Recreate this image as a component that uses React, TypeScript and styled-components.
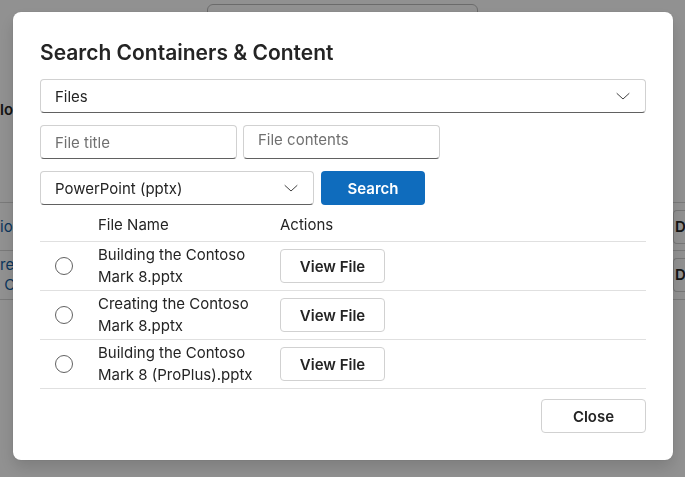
import React from 'react';
import styled, { createGlobalStyle } from 'styled-components';

const GlobalStyle = createGlobalStyle`
  html, body {
    margin: 0;
    padding: 0;
    background: #ffffff;
    font-family: Inter, "Open Sans", "Liberation Sans", sans-serif;
    color: #242424;
    overflow: hidden;
  }
  * { box-sizing: border-box; }
`;

// ---- page behind the dialog ----
const Page = styled.div`
  width: 685px;
  height: 477px;
  overflow: hidden;
`;

const TopSearch = styled.div`
  margin: 4px 0 0 207px;
  width: 271px;
  height: 32px;
  border: 1px solid #bdbdbd;
  border-radius: 6px;
`;

const PageHeading = styled.div`
  margin-top: 63px;
  font-size: 15px;
  font-weight: 600;
  line-height: 22px;
`;

const BgTable = styled.div`
  margin-top: 81px;
  border-top: 1px solid #d6d6d6;
`;

const BgRow = styled.div<{ $height: number }>`
  display: flex;
  justify-content: space-between;
  align-items: center;
  height: ${p => p.$height}px;
  border-bottom: 1px solid #d6d6d6;
`;

const BgLink = styled.div`
  color: #115ea3;
  font-size: 15px;
  line-height: 20px;
  width: 60px;
`;

const BgButton = styled.div`
  width: 12px;
  height: 34px;
  border: 1px solid #d1d1d1;
  border-right: none;
  border-radius: 4px 0 0 4px;
  padding-left: 1px;
  font-size: 15px;
  font-weight: 600;
  line-height: 32px;
  overflow: hidden;
`;

// ---- dialog ----
const Overlay = styled.div`
  position: fixed;
  inset: 0;
  background: rgba(0, 0, 0, 0.43);
  display: flex;
  justify-content: flex-start;
  align-items: flex-start;
  padding: 12px 0 0 13px;
`;

const Dialog = styled.div`
  width: 660px;
  background: #ffffff;
  border-radius: 8px;
  padding: 27px 27px 27px 27px;
  box-shadow: 0 8px 16px rgba(0, 0, 0, 0.14), 0 0 2px rgba(0, 0, 0, 0.12);
  display: flex;
  flex-direction: column;
`;

const Title = styled.h2`
  margin: 0 0 12px;
  font-size: 21px;
  font-weight: 600;
  line-height: 28px;
`;

const Field = styled.div<{ $width?: number }>`
  width: ${p => (p.$width ? `${p.$width}px` : '100%')};
  height: 34px;
  border: 1px solid #d1d1d1;
  border-bottom-color: #616161;
  border-radius: 4px;
  display: flex;
  align-items: center;
  padding: 0 14px;
  font-size: 15px;
  background: #fff;
`;

const FieldText = styled.span<{ $placeholder?: boolean; $top?: boolean }>`
  flex: 1;
  color: ${p => (p.$placeholder ? '#707070' : '#242424')};
  align-self: ${p => (p.$top ? 'flex-start' : 'center')};
  margin-top: ${p => (p.$top ? '4px' : '0')};
`;

const Chevron = () => (
  <svg width="16" height="16" viewBox="0 0 16 16" fill="none">
    <path d="M2 5.5 L8 11 L14 5.5" stroke="#424242" strokeWidth="1" strokeLinecap="round" strokeLinejoin="round" />
  </svg>
);

const Row = styled.div<{ $gap: number }>`
  display: flex;
  gap: ${p => p.$gap}px;
  margin-top: 12px;
`;

const PrimaryButton = styled.button`
  width: 104px;
  height: 34px;
  border: none;
  border-radius: 4px;
  background: #0f6cbd;
  color: #fff;
  font-family: inherit;
  font-size: 15px;
  font-weight: 600;
`;

const Button = styled.button`
  width: 105px;
  height: 34px;
  border: 1px solid #d1d1d1;
  border-radius: 4px;
  background: #fff;
  color: #242424;
  font-family: inherit;
  font-size: 15px;
  font-weight: 600;
`;

const Table = styled.div`
  display: grid;
  grid-template-columns: 48px 182px 1fr;
  margin-top: 2px;
`;

const HeadCell = styled.div`
  height: 35px;
  display: flex;
  align-items: center;
  padding: 0 10px;
  font-size: 15px;
  border-bottom: 1px solid #e0e0e0;
`;

const Cell = styled.div<{ $center?: boolean }>`
  height: 49px;
  display: flex;
  align-items: center;
  justify-content: ${p => (p.$center ? 'center' : 'flex-start')};
  padding: 0 10px;
  font-size: 15px;
  line-height: 22px;
  border-bottom: 1px solid #e0e0e0;
`;

const Radio = styled.span`
  width: 18px;
  height: 18px;
  border-radius: 50%;
  border: 1px solid #616161;
`;

const Footer = styled.div`
  display: flex;
  justify-content: flex-end;
  margin-top: 10px;
`;

const files = [
  'Building the Contoso Mark 8.pptx',
  'Creating the Contoso Mark 8.pptx',
  'Building the Contoso Mark 8 (ProPlus).pptx',
];

export default function App() {
  return (
    <>
      <GlobalStyle />
      <Page>
        <TopSearch />
        <PageHeading>lo</PageHeading>
        <BgTable>
          <BgRow $height={48}>
            <BgLink>io</BgLink>
            <BgButton>D</BgButton>
          </BgRow>
          <BgRow $height={49}>
            <BgLink>re<br />&nbsp;C</BgLink>
            <BgButton>D</BgButton>
          </BgRow>
        </BgTable>
      </Page>
      <Overlay>
        <Dialog>
          <Title>Search Containers &amp; Content</Title>
          <Field>
            <FieldText>Files</FieldText>
            <Chevron />
          </Field>
          <Row $gap={6}>
            <Field $width={197}>
              <FieldText $placeholder>File title</FieldText>
            </Field>
            <Field $width={197}>
              <FieldText $placeholder $top>File contents</FieldText>
            </Field>
          </Row>
          <Row $gap={7}>
            <Field $width={274}>
              <FieldText>PowerPoint (pptx)</FieldText>
              <Chevron />
            </Field>
            <PrimaryButton>Search</PrimaryButton>
          </Row>
          <Table>
            <HeadCell />
            <HeadCell>File Name</HeadCell>
            <HeadCell>Actions</HeadCell>
            {files.map(name => (
              <React.Fragment key={name}>
                <Cell $center>
                  <Radio />
                </Cell>
                <Cell>{name}</Cell>
                <Cell>
                  <Button>View File</Button>
                </Cell>
              </React.Fragment>
            ))}
          </Table>
          <Footer>
            <Button>Close</Button>
          </Footer>
        </Dialog>
      </Overlay>
    </>
  );
}
